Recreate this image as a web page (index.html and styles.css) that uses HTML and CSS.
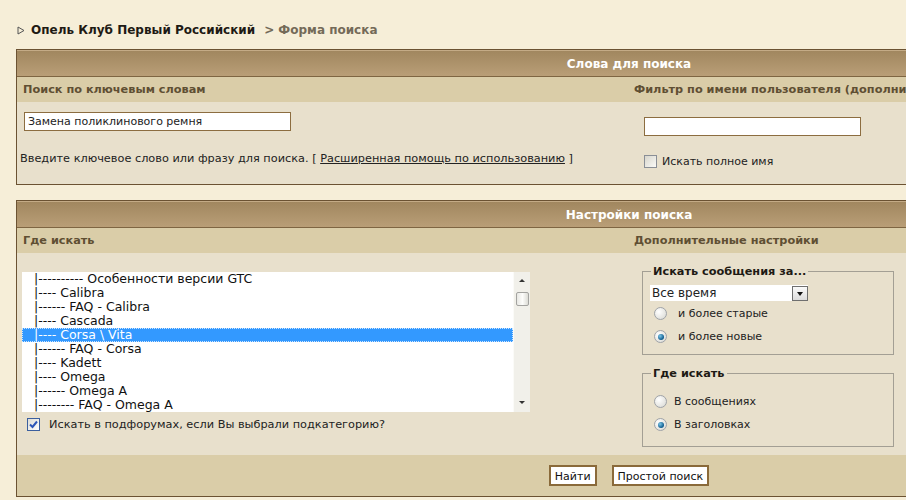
FILE: index.html
```html
<!DOCTYPE html>
<html>
<head>
<meta charset="utf-8">
<link rel="stylesheet" href="styles.css">
</head>
<body>
<div class="page">
  <div class="crumbs">
    <svg class="tri" width="8" height="9" viewBox="0 0 8 9"><path d="M1 1 L7 4.5 L1 8 Z" fill="none" stroke="#555" stroke-width="1"/></svg>
    <span class="home">Опель Клуб Первый Российский</span>
    <span class="cur">&gt; Форма поиска</span>
  </div>

  <div class="panel">
    <div class="phead">Слова для поиска</div>
    <div class="cols sub">
      <div class="cell">Поиск по ключевым словам</div>
      <div class="cell">Фильтр по имени пользователя (дополнительно)</div>
    </div>
    <div class="cols body body1">
      <div class="cell c1">
        <div class="textbox tb1">Замена поликлинового ремня</div>
        <div class="hint">Введите ключевое слово или фразу для поиска. [ <span class="link">Расширенная помощь по использованию</span> ]</div>
      </div>
      <div class="cell c2">
        <div class="textbox tb2"></div>
        <div class="chkrow chk-full"><span class="chk"></span><span>Искать полное имя</span></div>
      </div>
    </div>
  </div>

  <div class="panel panel2">
    <div class="phead">Настройки поиска</div>
    <div class="cols sub">
      <div class="cell">Где искать</div>
      <div class="cell">Дополнительные настройки</div>
    </div>
    <div class="cols body body2">
      <div class="cell c1">
        <div class="listbox">
          <div class="items">
            <div class="opt">|---------- Особенности версии GTC</div>
            <div class="opt">|---- Calibra</div>
            <div class="opt">|------ FAQ - Calibra</div>
            <div class="opt">|---- Cascada</div>
            <div class="opt sel">|---- Corsa \ Vita</div>
            <div class="opt">|------ FAQ - Corsa</div>
            <div class="opt">|---- Kadett</div>
            <div class="opt">|---- Omega</div>
            <div class="opt">|------ Omega A</div>
            <div class="opt">|-------- FAQ - Omega A</div>
          </div>
          <div class="sbar">
            <div class="arr up"></div>
            <div class="thumb"></div>
            <div class="track"></div>
            <div class="arr down"></div>
          </div>
        </div>
        <div class="chkrow chk-sub"><span class="chk on"><svg width="9" height="9" viewBox="0 0 9 9"><path d="M1 4.5 L3.5 7 L8 1.5" fill="none" stroke="#2d56b8" stroke-width="2"/></svg></span><span>Искать в подфорумах, если Вы выбрали подкатегорию?</span></div>
      </div>
      <div class="cell c2">
        <fieldset class="fs fs1">
          <legend>Искать сообщения за...</legend>
          <div class="select"><span class="val">Все время</span><span class="dd"></span></div>
          <div class="radrow r1"><span class="rad"></span><span>и более старые</span></div>
          <div class="radrow r1"><span class="rad on"></span><span>и более новые</span></div>
        </fieldset>
        <fieldset class="fs fs2">
          <legend>Где искать</legend>
          <div class="radrow first"><span class="rad"></span><span>В сообщениях</span></div>
          <div class="radrow"><span class="rad on"></span><span>В заголовках</span></div>
        </fieldset>
      </div>
    </div>
    <div class="foot">
      <span class="btn">Найти</span>
      <span class="btn">Простой поиск</span>
    </div>
  </div>
</div>
</body>
</html>
```

FILE: styles.css
```css
html, body {
  margin: 0;
  padding: 0;
  background: #f6eed8;
  overflow: hidden;
}
body {
  font-family: "DejaVu Sans", Verdana, sans-serif;
  font-size: 11.3px;
  color: #222;
}
.page {
  padding-left: 16px;
  width: 1226px;
}
.crumbs {
  display: flex;
  align-items: center;
  height: 16px;
  padding-top: 22px;
  margin-bottom: 11px;
  font-weight: bold;
  font-size: 12px;
}
.tri {
  margin-left: 1px;
  margin-right: 6px;
}
.home {
  color: #1e1a14;
}
.cur {
  color: #746a58;
  margin-left: 9px;
}
.panel {
  border: 1px solid #6b5232;
  box-sizing: border-box;
  width: 1226px;
}
.panel2 {
  margin-top: 15px;
}
.phead {
  line-height: 26px;
  background: linear-gradient(#a1875f, #b99e77);
  border-top: 1px solid #c4ab86;
  box-sizing: border-box;
  border-bottom: 1px solid #7e6542;
  height: 27px;
  color: #fff;
  font-weight: bold;
  font-size: 12px;
  text-align: center;
}
.cols {
  display: grid;
  grid-template-columns: 611px 1fr;
}
.sub {
  background: #dacda8;
  height: 25px;
  line-height: 25px;
  font-weight: bold;
  color: #5f4f33;
}
.sub .cell {
  padding-left: 6px;
  white-space: nowrap;
  overflow: hidden;
}
.body {
  background: #e8e0cc;
}
.body1 {
  height: 82px;
}
.body1 .c1 {
  padding: 10px 0 0 7px;
}
.textbox {
  background: #fff;
  border: 1px solid #8c6d40;
  height: 17px;
  line-height: 17px;
  padding-left: 3px;
  box-sizing: content-box;
  font-size: 11px;
}
.tb1 {
  width: 262px;
}
.tb2 {
  width: 212px;
}
.hint {
  margin-top: 21px;
  margin-left: -4px;
  color: #222;
}
.link {
  text-decoration: underline;
}
.body1 .c2 {
  padding: 15px 0 0 16px;
}
.chkrow {
  display: flex;
  align-items: center;
  gap: 5px;
}
.chk-full {
  margin-top: 19px;
  font-size: 11px;
}
.chk {
  width: 11px;
  height: 11px;
  border: 1px solid #8a8f96;
  background: linear-gradient(135deg, #d8d6cc, #fafaf7);
  display: inline-flex;
  align-items: center;
  justify-content: center;
}
.chk.on {
  border-color: #3b5f9e;
  background: linear-gradient(135deg, #dcdcd6, #fff);
}
.body2 {
  height: 202px;
}
.body2 .c1 {
  padding: 19px 0 0 5px;
}
.listbox {
  display: flex;
  width: 508px;
  height: 140px;
  background: #fff;
}
.items {
  flex: 1;
  font-size: 12.5px;
  color: #111;
  overflow: hidden;
}
.opt {
  height: 14px;
  line-height: 14px;
  padding-left: 12px;
  white-space: nowrap;
  box-sizing: border-box;
}
.opt.sel {
  background: #3399ff;
  color: #fff;
  outline: 1px dotted #cfe6ff;
  outline-offset: -1px;
}
.sbar {
  width: 16px;
  background: #f1f0ea;
  display: flex;
  flex-direction: column;
  align-items: center;
  border-left: 1px solid #fbfbf8;
}
.arr {
  width: 0;
  height: 0;
  border-left: 3px solid transparent;
  border-right: 3px solid transparent;
}
.arr.up {
  border-bottom: 3px solid #333;
  margin-top: 7px;
}
.arr.down {
  border-top: 3px solid #333;
  margin-bottom: 8px;
}
.thumb {
  margin-top: 10px;
  width: 13px;
  height: 14px;
  border: 1px solid #a3a3a0;
  border-radius: 2px;
  background: linear-gradient(90deg, #e8e8e4, #fdfdfb 50%, #dcdcd6);
  box-sizing: border-box;
}
.track {
  flex: 1;
}
.chk-sub {
  margin-top: 6px;
  margin-left: 5px;
  gap: 9px;
}
.body2 .c2 {
  padding: 12px 0 0 14px;
}
.fs {
  margin: 0;
  width: 252px;
  box-sizing: border-box;
  border: 1px solid #a39f94;
  padding: 0 0 0 7px;
  font-size: 11px;
}
.fs legend {
  font-weight: bold;
  color: #1e1a14;
  padding: 0 2px;
  margin-left: 1px;
  font-size: 11.3px;
}
.fs1 {
  height: 90px;
}
.fs2 {
  margin-top: 12px;
  height: 80px;
}
.select {
  display: flex;
  width: 158px;
  height: 16px;
  background: #fff;
  font-size: 12px;
  align-items: center;
  margin-top: 7px;
  margin-bottom: 1px;
}
.select .val {
  flex: 1;
  padding-left: 2px;
}
.dd {
  width: 14px;
  height: 13px;
  border: 1px solid #6f6f6f;
  background: linear-gradient(#fafafa, #dcdcdc);
  position: relative;
}
.dd::after {
  content: "";
  position: absolute;
  left: 4px;
  top: 5px;
  border-left: 3px solid transparent;
  border-right: 3px solid transparent;
  border-top: 4px solid #111;
}
.radrow {
  display: flex;
  align-items: center;
  gap: 7px;
  height: 23px;
  margin-left: 4px;
}
.radrow.first {
  margin-top: 10px;
}
.radrow.r1 {
  gap: 11px;
}
.rad {
  width: 11px;
  height: 11px;
  border-radius: 50%;
  border: 1px solid #9fa3a8;
  background: radial-gradient(circle at 35% 35%, #fff, #d6d6d0);
  box-sizing: content-box;
  position: relative;
}
.rad.on::after {
  content: "";
  position: absolute;
  left: 2.5px;
  top: 2.5px;
  width: 6px;
  height: 6px;
  border-radius: 50%;
  background: radial-gradient(circle at 35% 35%, #7cc6e8, #0d5a8c 70%);
}
.foot {
  background: #dacda8;
  height: 41px;
  display: flex;
  justify-content: center;
  align-items: flex-start;
  padding-top: 10px;
  box-sizing: border-box;
  gap: 15px;
}
.btn {
  background: #fff;
  border: 1px solid #8a6a3a;
  box-shadow: inset 0 0 0 1px #8a6a3a;
  font-size: 11px;
  color: #111;
  height: 21px;
  line-height: 21px;
  padding: 0 5px;
  box-sizing: border-box;
}
```
